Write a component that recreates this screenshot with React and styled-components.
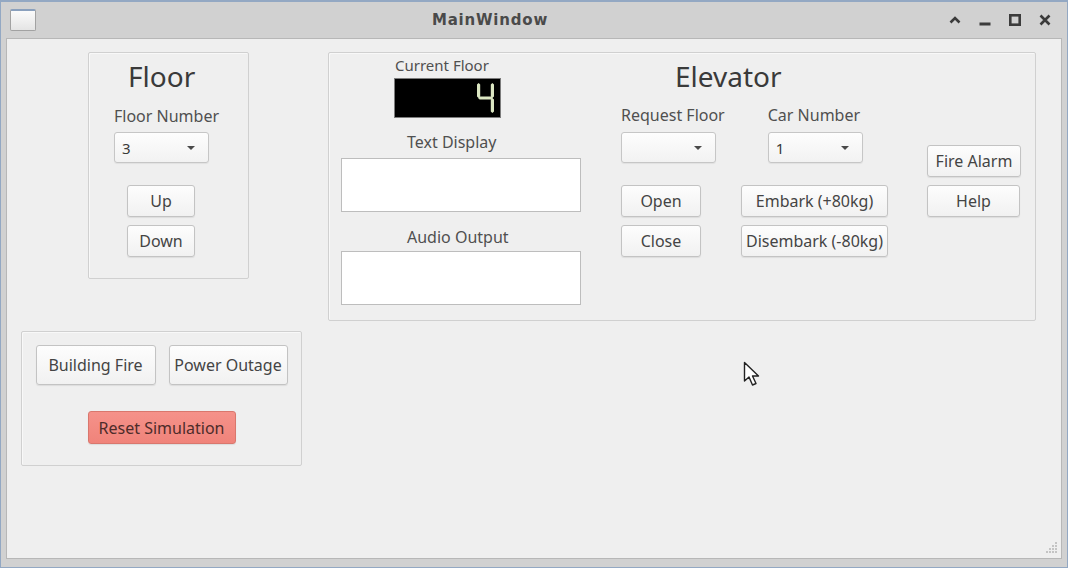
import styled, { createGlobalStyle } from "styled-components";

const GlobalStyle = createGlobalStyle`
  html, body {
    margin: 0;
    padding: 0;
    background: #d2d2d2;
  }
  * {
    box-sizing: border-box;
  }
`;

const Window = styled.div`
  position: relative;
  width: 1068px;
  height: 568px;
  display: flex;
  flex-direction: column;
  border: 1px solid #93a8c3;
  border-top-width: 2px;
  background: #d1d1d1;
  padding: 0 5px 8px 5px;
  font-family: "Noto Sans", "Open Sans", sans-serif;
`;

const TitleBar = styled.div`
  height: 36px;
  display: flex;
  align-items: center;
`;

const AppIcon = styled.div`
  width: 26px;
  height: 22px;
  margin-left: 4px;
  border: 1px solid #a2a2a2;
  border-top: 2px solid #8aa0bd;
  border-radius: 2px;
  background: linear-gradient(#fbfbfb, #e4e4e4);
`;

const WindowTitle = styled.div`
  flex: 1;
  text-align: center;
  font-family: "DejaVu Sans", sans-serif;
  font-weight: bold;
  font-size: 15px;
  letter-spacing: 0.8px;
  color: #4a4a4a;
  padding-left: 4px;
`;

const TitleButtons = styled.div`
  display: flex;
  align-items: center;
  margin-right: 2px;
`;

const TitleButton = styled.div`
  width: 30px;
  height: 30px;
  display: flex;
  align-items: center;
  justify-content: center;
  color: #3b3b3b;
`;

const Body = styled.div`
  position: relative;
  flex: 1;
  display: flex;
  align-items: flex-start;
  border: 1px solid #b7b7b7;
  background: #efefef;
  padding: 13px 0 0 14px;
`;

const LeftColumn = styled.div`
  width: 281px;
  display: flex;
  flex-direction: column;
`;

const GroupBox = styled.div`
  border: 1px solid #d0d0d0;
  border-radius: 2px;
  box-shadow: inset 1px 1px 0 #f8f8f8;
  display: flex;
`;

const FloorGroup = styled(GroupBox)`
  margin-left: 67px;
  width: 161px;
  height: 227px;
  flex-direction: column;
  align-items: flex-start;
  padding: 6px 0 0 25px;
`;

const EventGroup = styled(GroupBox)`
  margin-top: 52px;
  width: 281px;
  height: 135px;
  flex-direction: column;
  align-items: center;
  padding: 13px 13px 0 13px;
`;

const ElevatorGroup = styled(GroupBox)`
  margin-left: 26px;
  width: 708px;
  height: 269px;
  align-items: flex-start;
  padding: 0 0 0 12px;
`;

const GroupTitle = styled.div`
  font-size: 28px;
  line-height: 34px;
  color: #3a3a3a;
  margin-left: ${(p) => p.$ml || 0}px;
`;

const Label = styled.div`
  font-size: ${(p) => p.$size || 16}px;
  line-height: 20px;
  color: #505050;
  white-space: nowrap;
  margin-left: ${(p) => p.$ml || 0}px;
  margin-top: ${(p) => p.$mt || 0}px;
`;

const Combo = styled.div`
  width: 95px;
  height: 31px;
  margin-top: ${(p) => p.$mt || 6}px;
  display: flex;
  align-items: center;
  justify-content: space-between;
  padding: 0 13px 0 7px;
  border: 1px solid #c6c6c6;
  border-radius: 3px;
  background: linear-gradient(#fdfdfd, #f2f2f2);
  box-shadow: 0 1px 1px rgba(0, 0, 0, 0.06);
  font-size: 15px;
  color: #3a3a3a;
`;

const Caret = styled.span`
  width: 0;
  height: 0;
  border-left: 4px solid transparent;
  border-right: 4px solid transparent;
  border-top: 4px solid #4a4a4a;
`;

const Button = styled.div`
  width: ${(p) => p.$w}px;
  height: ${(p) => p.$h || 32}px;
  margin-top: ${(p) => p.$mt || 0}px;
  margin-left: ${(p) => p.$ml || 0}px;
  display: flex;
  align-items: center;
  justify-content: center;
  white-space: nowrap;
  font-size: 16px;
  color: ${(p) => (p.$danger ? "#4d2c2a" : "#444")};
  border: 1px solid ${(p) => (p.$danger ? "#d9776d" : "#c3c3c3")};
  border-radius: 3px;
  background: ${(p) =>
    p.$danger
      ? "linear-gradient(#f5928a, #f0837a)"
      : "linear-gradient(#fdfdfd, #f1f1f1)"};
  box-shadow: 0 1px 1px rgba(0, 0, 0, 0.08);
`;

const Row = styled.div`
  display: flex;
  gap: ${(p) => p.$gap || 0}px;
  margin-top: ${(p) => p.$mt || 0}px;
`;

const Stack = styled.div`
  display: flex;
  flex-direction: column;
  gap: 8px;
`;

const DisplayColumn = styled.div`
  width: 240px;
  display: flex;
  flex-direction: column;
  padding-top: 2px;
`;

const Lcd = styled.div`
  width: 107px;
  height: 40px;
  margin: 3px 0 0 53px;
  background: #000;
  border: 1px solid #7c7c7c;
  display: flex;
  align-items: center;
  justify-content: flex-end;
  padding-right: 6px;
`;

const TextBox = styled.div`
  width: 240px;
  height: 54px;
  margin-top: ${(p) => p.$mt}px;
  background: #fff;
  border: 1px solid #bdbdbd;
`;

const Controls = styled.div`
  margin-left: 40px;
  display: flex;
  flex-direction: column;
  padding-top: 6px;
`;

const Field = styled.div`
  display: flex;
  flex-direction: column;
`;

const SideColumn = styled.div`
  margin-left: 39px;
  padding-top: 92px;
  display: flex;
  flex-direction: column;
`;

const Cursor = styled.svg`
  position: absolute;
  left: 742px;
  top: 359px;
`;

const Grip = styled.svg`
  position: absolute;
  right: 3px;
  bottom: 3px;
`;

const SEGMENTS = {
  0: "abcdef",
  1: "bc",
  2: "abged",
  3: "abgcd",
  4: "fgbc",
  5: "afgcd",
  6: "afgedc",
  7: "abc",
  8: "abcdefg",
  9: "abcdfg",
};

const vSeg = (x, y1, y2, w) =>
  `${x + w / 2},${y1} ${x + w},${y1 + w / 2} ${x + w},${y2 - w / 2} ${x + w / 2},${y2} ${x},${y2 - w / 2} ${x},${y1 + w / 2}`;
const hSeg = (y, x1, x2, w) =>
  `${x1},${y + w / 2} ${x1 + w / 2},${y} ${x2 - w / 2},${y} ${x2},${y + w / 2} ${x2 - w / 2},${y + w} ${x1 + w / 2},${y + w}`;

function LcdDigit({ value }) {
  const w = 3.2;
  const shapes = {
    a: hSeg(0, 1, 16, w),
    b: vSeg(13.8, 1, 16, w),
    c: vSeg(13.8, 16, 31, w),
    d: hSeg(28.8, 1, 16, w),
    e: vSeg(0, 16, 31, w),
    f: vSeg(0, 1, 16, w),
    g: hSeg(14.4, 1, 16, w),
  };
  return (
    <svg width="17" height="32" viewBox="0 0 17 32" aria-label={String(value)}>
      {SEGMENTS[value].split("").map((s) => (
        <polygon key={s} points={shapes[s]} fill="#dbe6c2" />
      ))}
    </svg>
  );
}

export default function App() {
  return (
    <>
      <GlobalStyle />
      <Window>
        <TitleBar>
          <AppIcon />
          <WindowTitle>MainWindow</WindowTitle>
          <TitleButtons>
            <TitleButton>
              <svg width="12" height="8" viewBox="0 0 12 8">
                <path d="M1.5 6.5 L6 2 L10.5 6.5" fill="none" stroke="currentColor" strokeWidth="2.6" />
              </svg>
            </TitleButton>
            <TitleButton>
              <svg width="12" height="12" viewBox="0 0 12 12">
                <rect x="0.5" y="8.5" width="11" height="3" fill="currentColor" />
              </svg>
            </TitleButton>
            <TitleButton>
              <svg width="12" height="12" viewBox="0 0 12 12">
                <rect x="1.3" y="1.3" width="9.4" height="9.4" fill="none" stroke="currentColor" strokeWidth="2.6" />
              </svg>
            </TitleButton>
            <TitleButton>
              <svg width="12" height="12" viewBox="0 0 12 12">
                <path d="M1.5 1.5 L10.5 10.5 M10.5 1.5 L1.5 10.5" fill="none" stroke="currentColor" strokeWidth="2.6" />
              </svg>
            </TitleButton>
          </TitleButtons>
        </TitleBar>
        <Body>
          <LeftColumn>
            <FloorGroup>
              <GroupTitle $ml={14}>Floor</GroupTitle>
              <Label $mt={13}>Floor Number</Label>
              <Combo>
                <span>3</span>
                <Caret />
              </Combo>
              <Button $w={68} $ml={13} $mt={22}>Up</Button>
              <Button $w={68} $ml={13} $mt={8}>Down</Button>
            </FloorGroup>
            <EventGroup>
              <Row $gap={13}>
                <Button $w={120} $h={40}>Building Fire</Button>
                <Button $w={119} $h={40}>Power Outage</Button>
              </Row>
              <Button $w={148} $h={33} $mt={26} $danger>
                Reset Simulation
              </Button>
            </EventGroup>
          </LeftColumn>
          <ElevatorGroup>
            <DisplayColumn>
              <Label $size={15} $ml={54}>Current Floor</Label>
              <Lcd>
                <LcdDigit value={4} />
              </Lcd>
              <Label $ml={66} $mt={14}>Text Display</Label>
              <TextBox $mt={6} />
              <Label $ml={66} $mt={15}>Audio Output</Label>
              <TextBox $mt={4} />
            </DisplayColumn>
            <Controls>
              <GroupTitle $ml={54}>Elevator</GroupTitle>
              <Row $gap={43} $mt={12}>
                <Field>
                  <Label>Request Floor</Label>
                  <Combo $mt={7}>
                    <span />
                    <Caret />
                  </Combo>
                </Field>
                <Field>
                  <Label>Car Number</Label>
                  <Combo $mt={7}>
                    <span>1</span>
                    <Caret />
                  </Combo>
                </Field>
              </Row>
              <Row $gap={40} $mt={22}>
                <Stack>
                  <Button $w={80}>Open</Button>
                  <Button $w={80}>Close</Button>
                </Stack>
                <Stack>
                  <Button $w={147}>Embark (+80kg)</Button>
                  <Button $w={147}>Disembark (-80kg)</Button>
                </Stack>
              </Row>
            </Controls>
            <SideColumn>
              <Button $w={94}>Fire Alarm</Button>
              <Button $w={93} $mt={8}>Help</Button>
            </SideColumn>
          </ElevatorGroup>
          <Grip width="14" height="14" viewBox="0 0 14 14">
            {[
              [12, 2], [12, 5], [9, 5], [12, 8], [9, 8], [6, 8],
              [12, 11], [9, 11], [6, 11], [3, 11],
            ].map(([x, y]) => (
              <rect key={`${x}-${y}`} x={x - 1} y={y - 1} width="2" height="2" fill="#c4c4c4" />
            ))}
          </Grip>
        </Body>
        <Cursor width="20" height="28" viewBox="0 0 20 28">
          <path
            d="M1.5 1.5 L1.5 20 L6 16 L9.5 24 L13 22.5 L9.5 15 L15.5 15 Z"
            fill="#fff"
            stroke="#222"
            strokeWidth="1.4"
            strokeLinejoin="round"
          />
        </Cursor>
      </Window>
    </>
  );
}
